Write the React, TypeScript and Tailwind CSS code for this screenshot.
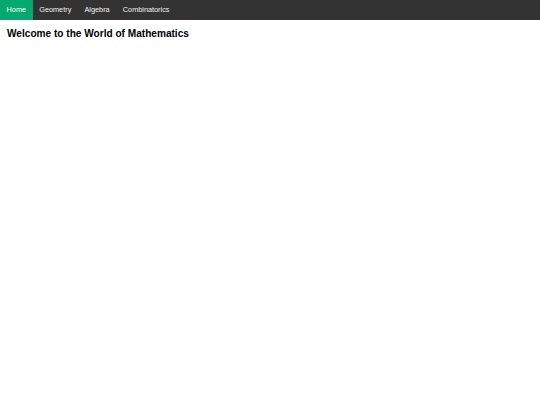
const links = ['Home', 'Geometry', 'Algebra', 'Combinatorics'];

export default function App() {
  return (
    <div className="min-h-screen bg-white font-['Liberation_Sans',Arial,sans-serif]">
      <nav className="flex h-[20px] bg-[#333333]">
        {links.map((name, i) => (
          <a
            key={name}
            href="#"
            className={
              'flex items-center px-[6.6px] text-[7.3px] ' +
              (i === 0 ? 'bg-[#04aa6d] text-white' : 'text-[#f2f2f2]')
            }
          >
            {name}
          </a>
        ))}
      </nav>
      <h2 className="mx-[7px] mt-[8px] text-[10.1px] font-bold leading-[12px] text-black">
        Welcome to the World of Mathematics
      </h2>
    </div>
  );
}
